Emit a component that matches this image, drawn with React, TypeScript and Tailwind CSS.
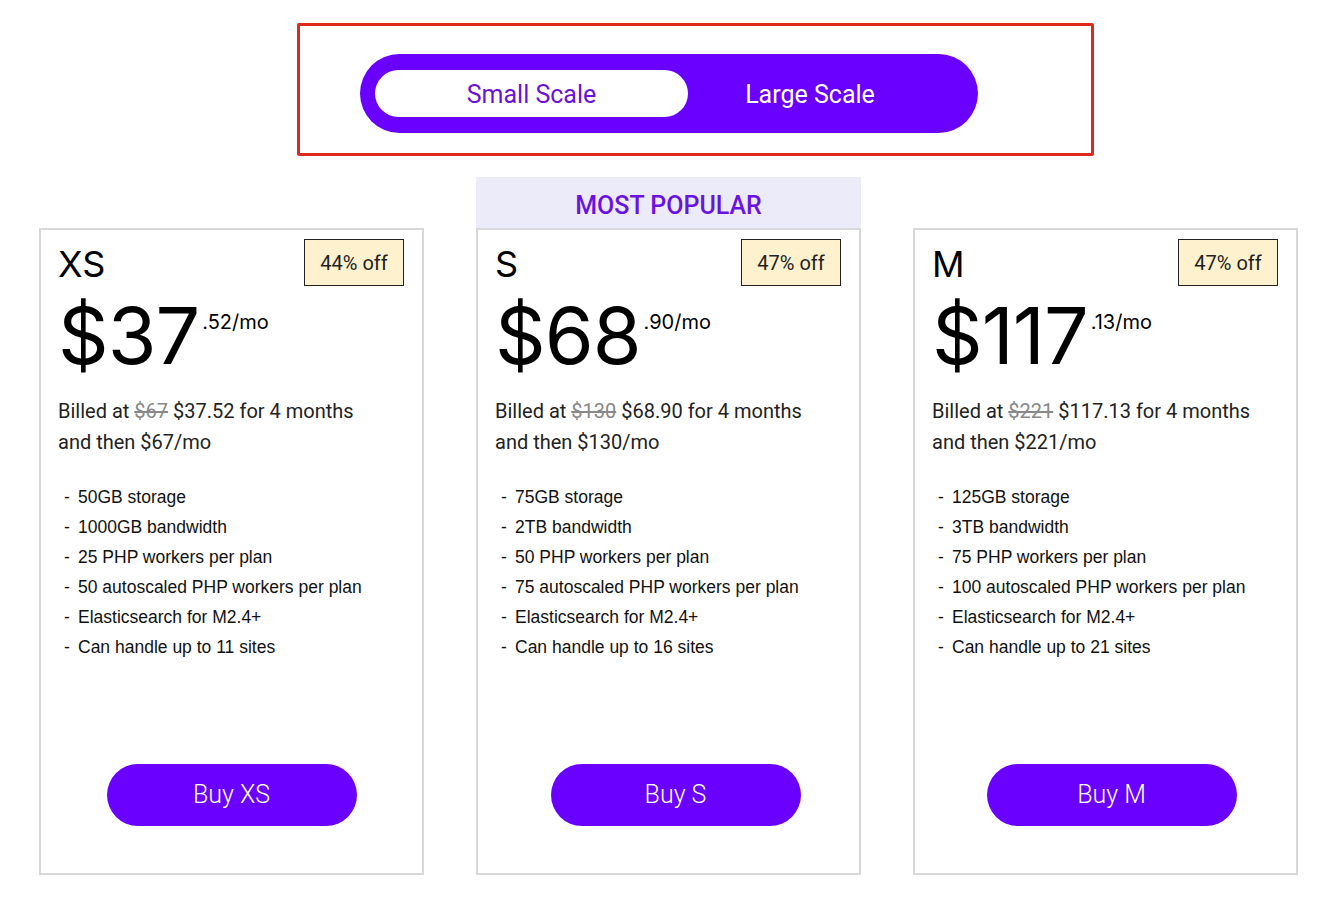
import React from 'react';

type Plan = {
  name: string;
  off: string;
  dollars: string;
  cents: string;
  was: string;
  now: string;
  after: string;
  features: string[];
  popular?: boolean;
  btnShift: string;
};

const plans: Plan[] = [
  {
    name: 'XS',
    off: '44% off',
    dollars: '$37',
    cents: '.52/mo',
    was: '$67',
    now: '$37.52',
    after: '$67/mo',
    btnShift: 'translate-x-0',
    features: [
      '50GB storage',
      '1000GB bandwidth',
      '25 PHP workers per plan',
      '50 autoscaled PHP workers per plan',
      'Elasticsearch for M2.4+',
      'Can handle up to 11 sites',
    ],
  },
  {
    name: 'S',
    off: '47% off',
    dollars: '$68',
    cents: '.90/mo',
    was: '$130',
    now: '$68.90',
    after: '$130/mo',
    popular: true,
    btnShift: 'translate-x-[7px]',
    features: [
      '75GB storage',
      '2TB bandwidth',
      '50 PHP workers per plan',
      '75 autoscaled PHP workers per plan',
      'Elasticsearch for M2.4+',
      'Can handle up to 16 sites',
    ],
  },
  {
    name: 'M',
    off: '47% off',
    dollars: '$117',
    cents: '.13/mo',
    was: '$221',
    now: '$117.13',
    after: '$221/mo',
    btnShift: 'translate-x-[6px]',
    features: [
      '125GB storage',
      '3TB bandwidth',
      '75 PHP workers per plan',
      '100 autoscaled PHP workers per plan',
      'Elasticsearch for M2.4+',
      'Can handle up to 21 sites',
    ],
  },
];

function PlanCard({ plan }: { plan: Plan }) {
  return (
    <div className="flex flex-col w-[385px]">
      {plan.popular ? (
        <div className="h-[51px] bg-[#ebebfa] flex items-center justify-center pt-[6px] text-[25px] font-medium text-[#6a12e0]">
          MOST POPULAR
        </div>
      ) : (
        <div className="h-[51px]" />
      )}
      <div className="h-[647px] border-2 border-[#d8d8d8] flex flex-col px-[17px] pt-[9px] pb-[47px]">
        <div className="flex justify-between items-start">
          <div className="text-[36px] leading-none mt-[7px] text-black font-['Inter',sans-serif] font-normal">{plan.name}</div>
          <div className="mt-0 mr-[1px] w-[100px] h-[47px] bg-[#fdf2cd] border border-[#222] flex items-center justify-center text-[20px] text-[#222]">
            {plan.off}
          </div>
        </div>
        <div className="flex items-start mt-[6px] font-['Inter',sans-serif] text-black">
          <span className="text-[79px] leading-[86px] tracking-[-1px]">{plan.dollars}</span>
          <span className="text-[20px] leading-none mt-[20px] ml-[3px]">{plan.cents}</span>
        </div>
        <div className="mt-[18px] text-[20px] leading-[31px] text-[#222]">
          <div>
            Billed at <span className="line-through text-[#888]">{plan.was}</span> {plan.now} for 4 months
          </div>
          <div>and then {plan.after}</div>
        </div>
        <ul className="mt-[24px] pl-[6px] font-['Liberation_Sans',Arial,sans-serif] text-[17.5px] leading-[30px] text-[#111]">
          {plan.features.map((f) => (
            <li key={f} className="flex">
              <span className="w-[14px]">-</span>
              <span>{f}</span>
            </li>
          ))}
        </ul>
        <button
          className={`mt-auto self-center w-[250px] h-[62px] rounded-full bg-[#6a00ff] text-white text-[25px] font-light ${plan.btnShift}`}
        >
          Buy {plan.name}
        </button>
      </div>
    </div>
  );
}

export default function App() {
  return (
    <div className="min-h-screen bg-white font-['Roboto',sans-serif] pb-[24px]">
      {/* scale toggle */}
      <div className="ml-[297px] pt-[23px]">
        <div className="w-[797px] h-[133px] border-[3px] border-[#e0291d] rounded-[2px] pl-[60px] pt-[28px]">
          <div className="w-[618px] h-[79px] rounded-full bg-[#6a00ff] flex items-center pl-[15px] pr-[15px]">
            <button className="w-[313px] h-[47px] pt-[2px] rounded-full bg-white text-[#6a12d8] text-[25px]">
              Small Scale
            </button>
            <button className="w-[244px] h-[47px] pt-[2px] text-white text-[25px]">Large Scale</button>
          </div>
        </div>
      </div>

      {/* plans */}
      <div className="flex gap-[52px] pl-[39px] mt-[21px]">
        {plans.map((p) => (
          <PlanCard key={p.name} plan={p} />
        ))}
      </div>
    </div>
  );
}
